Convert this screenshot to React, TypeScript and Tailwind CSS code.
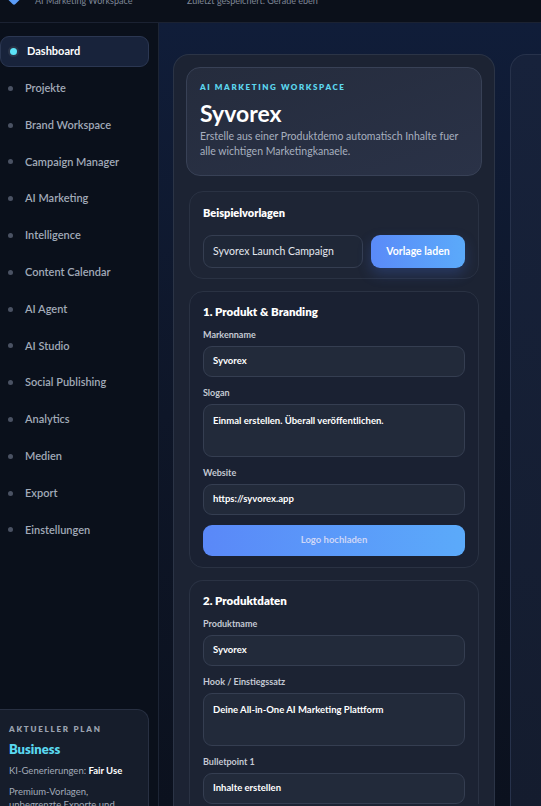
import React from "react";

const navItems = [
  "Projekte",
  "Brand Workspace",
  "Campaign Manager",
  "AI Marketing",
  "Intelligence",
  "Content Calendar",
  "AI Agent",
  "AI Studio",
  "Social Publishing",
  "Analytics",
  "Medien",
  "Export",
  "Einstellungen",
];

const Field = ({ label, value, area }: { label: string; value: string; area?: boolean }) => (
  <div className="flex flex-col">
    <label className="text-[9px] font-bold text-[#c4c9d3] leading-[12px] mb-[5px]">{label}</label>
    <div
      className={
        "rounded-[9px] border border-[#353e51] bg-[#222a3a] px-[9px] text-[9.5px] font-bold text-white " +
        (area ? "h-[53px] pt-[9px]" : "h-[31px] flex items-center")
      }
    >
      {value}
    </div>
  </div>
);

export default function App() {
  return (
    <div className="h-[806px] w-[541px] overflow-hidden bg-[#0a0f1a] flex flex-col font-['Lato','Noto_Sans',sans-serif]">
      <header className="h-[23px] shrink-0 border-b border-[#1b2232] bg-[#0b101a] overflow-hidden flex">
        <svg width="20" height="20" viewBox="0 0 20 20" className="ml-[4px] -mt-[13px] shrink-0">
          <rect x="4" y="4" width="12" height="12" rx="2" transform="rotate(45 10 10)" fill="#5b9cf8" />
        </svg>
        <div className="-mt-[5px] ml-[11px] w-[152px] text-[9px] leading-[12px] text-[#7f8797]">AI Marketing Workspace</div>
        <div className="-mt-[5px] text-[9px] leading-[12px] text-[#7f8797]">Zuletzt gespeichert: Gerade eben</div>
      </header>

      <div className="flex flex-1 min-h-0">
        <aside className="w-[159px] shrink-0 border-r border-[#1d2535] bg-[#0a101b] pr-[9px] pt-[13px] flex flex-col">
          <nav className="flex flex-col gap-[5.8px]">
            <div className="h-[31px] rounded-[9px] border border-[#2b3752] bg-[#18233b] flex items-center pl-[7px]">
              <span className="w-[11px] h-[11px] rounded-full bg-[#2a3448] flex items-center justify-center">
                <span className="w-[7px] h-[7px] rounded-full bg-[#5ce3f7]" />
              </span>
              <span className="ml-[8px] text-[11px] font-bold text-white">Dashboard</span>
            </div>
            {navItems.map((item) => (
              <div key={item} className="h-[31px] flex items-center pl-[8px]">
                <span className="w-[5px] h-[5px] rounded-full bg-[#4a5263]" />
                <span className="ml-[12px] text-[11px] font-semibold text-[#a1aab8]">{item}</span>
              </div>
            ))}
          </nav>
          <div className="mt-[164px] rounded-r-[12px] border border-l-0 border-[#283042] bg-[#161d2b] pl-[9px] pr-[8px] pt-[13px] pb-[10px]">
            <div className="text-[8px] font-extrabold tracking-[0.22em] text-[#9aa2b0]">AKTUELLER PLAN</div>
            <div className="mt-[5px] text-[13px] font-extrabold text-[#5ad8f0]">Business</div>
            <div className="mt-[4px] text-[9.5px] text-[#a3abb9]">
              KI-Generierungen: <span className="font-bold text-white">Fair Use</span>
            </div>
            <div className="mt-[7px] text-[9.5px] leading-[13px] text-[#a3abb9]">
              Premium-Vorlagen,
              <br />
              unbegrenzte Exporte und
            </div>
          </div>
        </aside>

        <main className="flex-1 flex gap-[15px] pl-[14px] pt-[31px] bg-gradient-to-b from-[#101d39] via-[#0e1628] to-[#0b111e]">
          <section className="w-[322px] shrink-0 rounded-t-[16px] border border-b-0 border-[#2b3446] bg-[#1c2333] pt-[12px] flex flex-col">
            <div className="mx-[12px] rounded-[14px] border border-[#384156] bg-gradient-to-br from-[#252c3d] to-[#2a3247] px-[13px] pt-[13px] pb-[16px]">
              <div className="text-[8px] font-extrabold tracking-[0.2em] text-[#5cd6ee]">AI MARKETING WORKSPACE</div>
              <div className="mt-[6px] text-[23px] leading-[28px] font-bold text-white">Syvorex</div>
              <p className="mt-[2px] text-[10.5px] leading-[15px] text-[#a7afbf]">
                Erstelle aus einer Produktdemo automatisch Inhalte fuer alle wichtigen Marketingkanaele.
              </p>
            </div>

            <div className="mt-[15px] mx-[15px] rounded-[14px] border border-[#2a3243] bg-[#1e2535] px-[13px] pt-[14px] pb-[10px]">
              <div className="text-[11px] font-extrabold text-white leading-[14px]">Beispielvorlagen</div>
              <div className="mt-[15px] flex gap-[8px]">
                <div className="flex-1 h-[33px] rounded-[9px] border border-[#353e51] bg-[#1f2737] flex items-center px-[9px] text-[10.5px] text-[#e4e8ef]">
                  Syvorex Launch Campaign
                </div>
                <button className="w-[94px] h-[33px] rounded-[9px] bg-gradient-to-r from-[#5a8af8] to-[#5baafa] text-[10.5px] font-bold text-white shadow-[0_6px_14px_rgba(70,120,240,0.25)]">
                  Vorlage laden
                </button>
              </div>
            </div>

            <div className="mt-[12px] mx-[15px] rounded-[14px] border border-[#2a3243] bg-[#1a2132] px-[13px] pt-[13px] pb-[11px] flex flex-col gap-[10px]">
              <div className="text-[11.5px] font-extrabold text-white leading-[14px]">1. Produkt &amp; Branding</div>
              <Field label="Markenname" value="Syvorex" />
              <Field label="Slogan" value="Einmal erstellen. Überall veröffentlichen." area />
              <Field label="Website" value="https://syvorex.app" />
              <button className="h-[31px] rounded-[9px] bg-gradient-to-r from-[#5a88f8] to-[#5baafa] text-[9.5px] font-bold text-[#cdd6f7]">
                Logo hochladen
              </button>
            </div>

            <div className="mt-[12px] mx-[15px] rounded-t-[14px] border border-b-0 border-[#2a3243] bg-[#1c2333] px-[13px] pt-[13px] flex flex-col gap-[10px]">
              <div className="text-[11.5px] font-extrabold text-white leading-[14px]">2. Produktdaten</div>
              <Field label="Produktname" value="Syvorex" />
              <Field label="Hook / Einstiegssatz" value="Deine All-in-One AI Marketing Plattform" area />
              <Field label="Bulletpoint 1" value="Inhalte erstellen" />
            </div>
          </section>

          <section className="flex-1 rounded-tl-[16px] border border-r-0 border-b-0 border-[#27324b] bg-gradient-to-b from-[#17223b] to-[#141c2e]" />
        </main>
      </div>
    </div>
  );
}
